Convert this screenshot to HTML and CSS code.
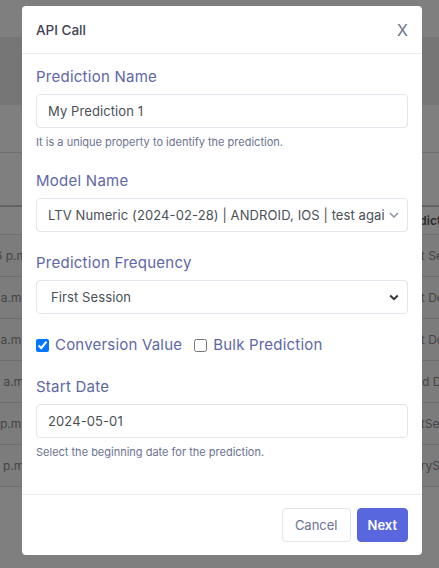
FILE: index.html
```html
<!DOCTYPE html>
<html lang="en">
    <head>
        <meta charset="utf-8">
        <link rel="stylesheet" href="styles.css">
    </head>
    <body>
        <div class="page">
            <div class="topbar"></div>
            <div class="band"></div>
            <div class="strip"></div>
            <div class="strip tall"></div>
            <div class="trow head">
                <span class="tleft">Created</span>
                <span class="tright">Prediction</span>
            </div>
            <div class="trow"><span class="tleft">2024-05-01 10:36 p.m.</span><span class="tright">First Session</span></div>
            <div class="trow"><span class="tleft">2024-04-30 9:12 a.m.</span><span class="tright">First Download</span></div>
            <div class="trow"><span class="tleft">2024-04-29 1:05 a.m.</span><span class="tright">First Download</span></div>
            <div class="trow"><span class="tleft">2024-04-28 8:40 a.m.</span><span class="tright">Third Download</span></div>
            <div class="trow"><span class="tleft">2024-04-27 4:21 p.m.</span><span class="tright">FirstSession</span></div>
            <div class="trow"><span class="tleft">2024-04-26 6:02 p.m.</span><span class="tright">EverySession</span></div>
        </div>

        <div class="overlay">
            <div class="modal">
                <div class="modal-header">
                    <span class="modal-title">API Call</span>
                    <span class="modal-close">X</span>
                </div>
                <div class="modal-body">
                    <div class="group">
                        <div class="field-label">Prediction Name</div>
                        <div class="control">My Prediction 1</div>
                        <div class="help">It is a unique property to identify the prediction.</div>
                    </div>
                    <div class="group">
                        <div class="field-label">Model Name</div>
                        <div class="control select">
                            <span class="select-text">LTV Numeric (2024-02-28) | ANDROID, IOS | test again for the model</span>
                            <svg class="chev light" width="10" height="6" viewBox="0 0 10 6"><polyline points="1,1 5,5 9,1" fill="none" stroke="#8a8f9c" stroke-width="1.4"/></svg>
                        </div>
                    </div>
                    <div class="group">
                        <div class="field-label">Prediction Frequency</div>
                        <div class="control select freq">
                            <span class="select-text">First Session</span>
                            <svg class="chev" width="10" height="7" viewBox="0 0 10 7"><polyline points="1.2,1.5 5,5.2 8.8,1.5" fill="none" stroke="#333" stroke-width="2"/></svg>
                        </div>
                    </div>
                    <div class="checks">
                        <label class="check"><input type="checkbox" checked> Conversion Value</label>
                        <label class="check"><input type="checkbox"> Bulk Prediction</label>
                    </div>
                    <div class="group">
                        <div class="field-label">Start Date</div>
                        <div class="control">2024-05-01</div>
                        <div class="help">Select the beginning date for the prediction.</div>
                    </div>
                </div>
                <div class="modal-footer">
                    <button class="btn btn-cancel">Cancel</button>
                    <button class="btn btn-next">Next</button>
                </div>
            </div>
        </div>
    </body>
</html>
```

FILE: styles.css
```css
*{
    margin: 0;
    padding: 0;
    box-sizing: border-box;
}

body{
    font-family: Inter, "Open Sans", sans-serif;
    background: #fff;
    overflow: hidden;
}

/* page behind the dialog */
.page{
    width: 439px;
    height: 568px;
    background: #fff;
}
.topbar{
    height: 37px;
    background: #fff;
}
.band{
    height: 68px;
    background: #ececec;
}
.strip{
    height: 48px;
    border-bottom: 1px solid #dcdcdc;
}
.strip.tall{
    height: 54px;
    border-bottom: 2px solid #c8c8c8;
}
.trow{
    height: 42px;
    display: flex;
    align-items: center;
    justify-content: space-between;
    border-bottom: 1px solid #dcdcdc;
    font-size: 12px;
    color: #8c8c8c;
    white-space: nowrap;
    background: #f8f8f8;
}
.trow.head{
    height: 28px;
    background: #fff;
    color: #555;
    font-weight: 600;
}
.tleft{
    margin-left: -100px;
}
.tright{
    margin-right: -71px;
    width: 110px;
}

.overlay{
    position: fixed;
    left: 0;
    top: 0;
    right: 0;
    bottom: 0;
    background: rgba(0, 0, 0, 0.5);
    padding: 6px 0 0 22px;
}

.modal{
    width: 400px;
    background: #fff;
    border-radius: 4px;
}

.modal-header{
    height: 48px;
    border-bottom: 1px solid #ebedf2;
    display: flex;
    align-items: center;
    justify-content: space-between;
    padding: 0 14px;
}
.modal-title{
    font-size: 13.5px;
    font-weight: 500;
    color: #3f4254;
}
.modal-close{
    font-size: 16px;
    color: #6c7293;
}

.modal-body{
    padding: 13px 14px 34px;
}

.group{
    margin-bottom: 21px;
}
.group:last-child{
    margin-bottom: 0;
}

.field-label{
    font-size: 15px;
    line-height: 20px;
    color: #5e67a6;
    letter-spacing: 0.25px;
    margin-bottom: 7px;
}

.control{
    height: 34px;
    border: 1px solid #e2e5ec;
    border-radius: 4px;
    display: flex;
    align-items: center;
    padding: 0 11px;
    font-size: 13px;
    color: #495057;
    letter-spacing: 0.1px;
}

.select{
    padding-right: 8px;
}
.select-text{
    flex: 1;
    overflow: hidden;
    white-space: nowrap;
}
.freq{
    padding-left: 14px;
}
.chev{
    margin-left: 4px;
    flex: none;
}

.help{
    font-size: 11px;
    line-height: 16px;
    color: #6c7293;
    margin-top: 6px;
}

.checks{
    display: flex;
    align-items: center;
    gap: 12px;
    line-height: 20px;
    margin-bottom: 22px;
}
.check{
    display: flex;
    align-items: center;
    gap: 6px;
    font-size: 15px;
    color: #5e67a6;
    letter-spacing: 0.2px;
}
.check input{
    width: 13px;
    height: 13px;
    margin: 0;
}

.modal-footer{
    border-top: 1px solid #ebedf2;
    padding: 13px 14px;
    display: flex;
    justify-content: flex-end;
    gap: 6px;
}

.btn{
    height: 34px;
    border-radius: 4px;
    font-family: Inter, "Open Sans", sans-serif;
    font-size: 13px;
    padding: 0 12px;
    cursor: pointer;
}
.btn-cancel{
    background: #fff;
    border: 1px solid #e2e5ec;
    color: #6c7293;
}
.btn-next{
    background: #5867dd;
    border: 1px solid #5867dd;
    color: #fff;
    font-weight: 600;
    padding: 0 10px;
}
```
